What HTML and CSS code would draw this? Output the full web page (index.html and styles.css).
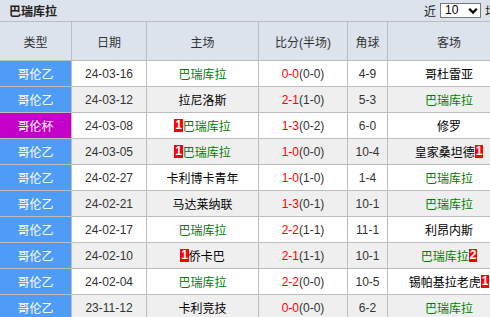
FILE: index.html
```html
<!DOCTYPE html>
<html lang="zh">
<head>
<meta charset="utf-8">
<title>巴瑞库拉</title>
<link rel="stylesheet" href="styles.css">
</head>
<body>
<div class="panel">
  <div class="titlebar">
    <span class="title">巴瑞库拉</span>
    <span class="recent">近 <span class="sel">10<svg width="10" height="8" viewBox="0 0 10 8"><path d="M1.2 1.8 L5 5.6 L8.8 1.8" fill="none" stroke="#000" stroke-width="2.2"/></svg></span> 场</span>
  </div>
  <div class="grid">
    <div class="h">类型</div><div class="h">日期</div><div class="h">主场</div><div class="h">比分(半场)</div><div class="h">角球</div><div class="h">客场</div>

    <div class="row"><div class="c t">哥伦乙</div><div class="c d">24-03-16</div><div class="c g">巴瑞库拉</div><div class="c s"><b>0-0</b>(0-0)</div><div class="c d">4-9</div><div class="c">哥杜雷亚</div></div>
    <div class="row alt"><div class="c t">哥伦乙</div><div class="c d">24-03-12</div><div class="c">拉尼洛斯</div><div class="c s"><b>2-1</b>(1-0)</div><div class="c d">5-3</div><div class="c g">巴瑞库拉</div></div>
    <div class="row"><div class="c t cup">哥伦杯</div><div class="c d">24-03-08</div><div class="c g"><i class="rc">1</i>巴瑞库拉</div><div class="c s"><b>1-3</b>(0-2)</div><div class="c d">6-0</div><div class="c">修罗</div></div>
    <div class="row alt"><div class="c t">哥伦乙</div><div class="c d">24-03-05</div><div class="c g"><i class="rc">1</i>巴瑞库拉</div><div class="c s"><b>1-0</b>(0-0)</div><div class="c d">10-4</div><div class="c">皇家桑坦德<i class="rc">1</i></div></div>
    <div class="row"><div class="c t">哥伦乙</div><div class="c d">24-02-27</div><div class="c">卡利博卡青年</div><div class="c s"><b>1-0</b>(1-0)</div><div class="c d">1-4</div><div class="c g">巴瑞库拉</div></div>
    <div class="row alt"><div class="c t">哥伦乙</div><div class="c d">24-02-21</div><div class="c">马达莱纳联</div><div class="c s"><b>1-3</b>(0-1)</div><div class="c d">10-1</div><div class="c g">巴瑞库拉</div></div>
    <div class="row"><div class="c t">哥伦乙</div><div class="c d">24-02-17</div><div class="c g">巴瑞库拉</div><div class="c s"><b>2-2</b>(1-1)</div><div class="c d">11-1</div><div class="c">利昂内斯</div></div>
    <div class="row alt"><div class="c t">哥伦乙</div><div class="c d">24-02-10</div><div class="c"><i class="rc">1</i>侨卡巴</div><div class="c s"><b>2-1</b>(1-1)</div><div class="c d">10-1</div><div class="c g">巴瑞库拉<i class="rc">2</i></div></div>
    <div class="row"><div class="c t">哥伦乙</div><div class="c d">24-02-04</div><div class="c g">巴瑞库拉</div><div class="c s"><b>2-2</b>(0-0)</div><div class="c d">10-5</div><div class="c">锡帕基拉老虎<i class="rc">1</i></div></div>
    <div class="row alt"><div class="c t">哥伦乙</div><div class="c d">23-11-12</div><div class="c">卡利竞技</div><div class="c s"><b>0-0</b>(0-0)</div><div class="c d">6-2</div><div class="c g">巴瑞库拉</div></div>
  </div>
</div>
</body>
</html>
```

FILE: styles.css
```css
html, body {
  margin: 0;
  padding: 0;
  overflow: hidden;
  background: #fff;
}
body {
  font-family: "Liberation Sans", "Noto Sans CJK SC", sans-serif;
  font-size: 12px;
  color: #222;
}
.panel {
  width: 510px;
}
.titlebar {
  height: 21px;
  background: #dde3ec;
  display: flex;
  align-items: center;
  justify-content: space-between;
  padding: 0 13px 0 9px;
}
.title {
  font-weight: bold;
  color: #222;
}
.recent {
  display: flex;
  align-items: center;
  gap: 4px;
  color: #222;
}
.sel {
  width: 33px;
  height: 13px;
  border: 1px solid #777;
  background: #fff;
  display: inline-flex;
  align-items: center;
  justify-content: space-between;
  padding: 0 2px 0 4px;
  box-sizing: content-box;
  line-height: 13px;
  color: #000;
  font-size: 12px;
}
.grid {
  display: grid;
  grid-template-columns: 71px 74px 111px 88px 39px 1fr;
  grid-template-rows: 38px;
  grid-auto-rows: 25px;
  gap: 1px;
  background: #bdbdbd;
  border-top: 1px solid #bdbdbd;
}
.row {
  display: contents;
}
.h {
  background: #dde3ec;
  display: flex;
  align-items: center;
  justify-content: center;
  color: #333;
}
.c {
  background: #fff;
  display: flex;
  align-items: center;
  justify-content: center;
  color: #000;
  white-space: nowrap;
}
.row.alt .c {
  background: #efefef;
}
.row .c.t {
  background: #4f9cf7;
  color: #fff;
}
.row .c.t.cup {
  background: #c400c8;
}
.d {
  color: #333;
}
.c.g {
  color: #008000;
}
.s {
  color: #333;
}
.s b {
  font-weight: normal;
  color: #f00;
}
.rc {
  font-style: normal;
  font-weight: bold;
  background: #f00;
  color: #fff;
  line-height: 13px;
  padding: 0 1px;
  font-size: 12px;
}
```
